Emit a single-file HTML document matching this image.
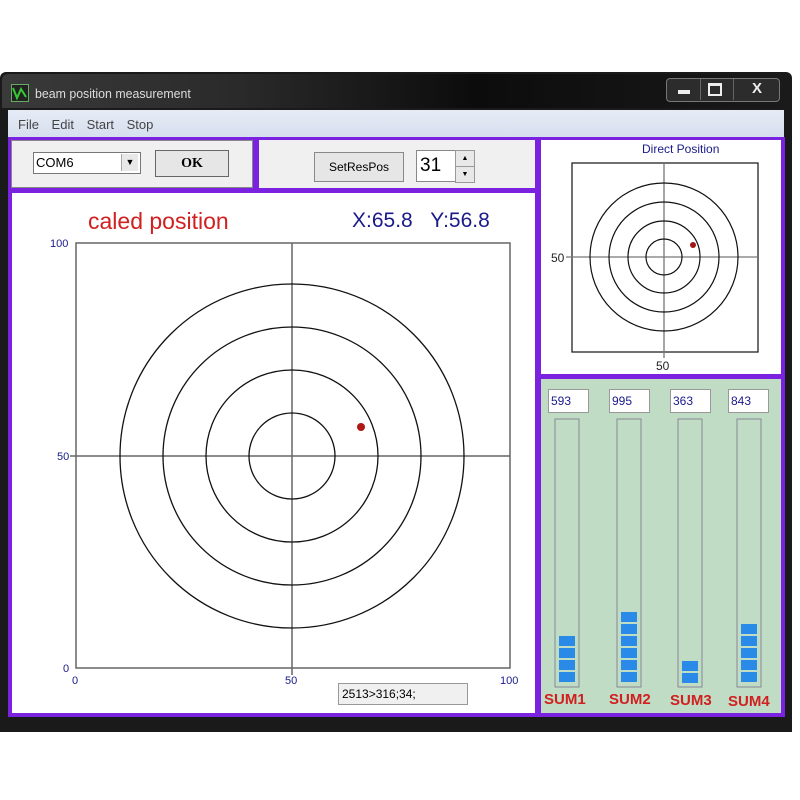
<!DOCTYPE html>
<html><head><style>
body{margin:0;width:800px;height:800px;background:#fff;position:relative;overflow:hidden;font-family:"Liberation Sans",sans-serif}
.a{position:absolute}
</style></head><body>
<div class="a" style="left:0;top:72px;width:792px;height:660px;background:#1a1a1a;border-radius:6px 6px 0 0"></div>
<div class="a" style="left:2px;top:74px;width:788px;height:34px;background:linear-gradient(90deg,#3a3a3a 0%,#2a2a2a 30%,#0c0c0c 60%,#1a1a1a 100%);border-radius:6px 6px 0 0"></div>
<div class="a" style="left:11px;top:84px;width:16px;height:16px;background:#222;border:1px solid #6a6"></div>
<svg class="a" style="left:11px;top:84px" width="18" height="18"><path d="M2 4 L6 14 L10 5 L15 13" stroke="#3c3" stroke-width="2" fill="none"/></svg>
<div class="a" style="left:35px;top:86px;color:#ddd;font-size:13px;transform:scaleX(0.95);transform-origin:left">beam position measurement</div>
<div class="a" style="left:666px;top:78px;width:112px;height:22px;background:#2c2c2c;border:1px solid #777;border-radius:4px"></div>
<div class="a" style="left:678px;top:90px;width:12px;height:4px;background:#eee"></div>
<div class="a" style="left:708px;top:83px;width:10px;height:8px;border:2px solid #eee;border-top-width:3px"></div>
<div class="a" style="left:752px;top:80px;color:#eee;font-size:15px;font-weight:bold">X</div>
<div class="a" style="left:700px;top:79px;width:1px;height:21px;background:#666"></div>
<div class="a" style="left:733px;top:79px;width:1px;height:21px;background:#666"></div>
<div class="a" style="left:8px;top:110px;width:776px;height:27px;background:linear-gradient(#e6ecf6,#d6dfee)"></div>
<div class="a" style="left:18px;top:117px;color:#444;font-size:13px;word-spacing:9px">File Edit Start Stop</div>
<div class="a" style="left:8px;top:137px;width:777px;height:580px;background:#7a22e0"></div>
<div class="a" style="left:11px;top:140px;width:240px;height:46px;background:#f0f0f0;border:1px solid #888"></div>
<div class="a" style="left:33px;top:152px;width:106px;height:20px;background:#fff;border:1px solid #777;font-size:13px;line-height:20px;text-indent:2px">COM6</div>
<div class="a" style="left:121px;top:154px;width:16px;height:17px;background:#e8e8e8;border-left:1px solid #aaa;font-size:9px;text-align:center;line-height:17px">▼</div>
<div class="a" style="left:155px;top:150px;width:72px;height:25px;background:#e6e6e6;border:1px solid #666;font:bold 14px 'Liberation Serif',serif;text-align:center;line-height:25px">OK</div>
<div class="a" style="left:259px;top:140px;width:276px;height:48px;background:#f0f0f0"></div>
<div class="a" style="left:314px;top:152px;width:88px;height:28px;background:#e6e6e6;border:1px solid #888;font-size:12px;text-align:center;line-height:28px">SetResPos</div>
<div class="a" style="left:416px;top:150px;width:38px;height:30px;background:#fff;border:1px solid #888;font-size:19px;line-height:30px;text-indent:3px">31</div>
<div class="a" style="left:455px;top:150px;width:18px;height:15px;background:#e8e8e8;border:1px solid #999;font-size:7px;text-align:center;line-height:15px">▲</div>
<div class="a" style="left:455px;top:166px;width:18px;height:15px;background:#e8e8e8;border:1px solid #999;font-size:7px;text-align:center;line-height:15px">▼</div>
<div class="a" style="left:12px;top:193px;width:523px;height:520px;background:#fff"></div>
<div class="a" style="left:88px;top:208px;color:#d02020;font-size:23px">caled position</div>
<div class="a" style="left:352px;top:209px;color:#1a1a8a;font-size:21px">X:65.8&nbsp;&nbsp;&nbsp;Y:56.8</div>
<svg class="a" style="left:0;top:0" width="800" height="800">
<rect x="76" y="243" width="434" height="425" fill="none" stroke="#666" stroke-width="1.5"/>
<line x1="292" y1="243" x2="292" y2="675" stroke="#666" stroke-width="1.5"/>
<line x1="70" y1="456" x2="510" y2="456" stroke="#666" stroke-width="1.5"/>
<g fill="none" stroke="#111" stroke-width="1.3"><circle cx="292" cy="456" r="43"/><circle cx="292" cy="456" r="86"/><circle cx="292" cy="456" r="129"/><circle cx="292" cy="456" r="172"/></g>
<circle cx="361" cy="427" r="4" fill="#b01818"/>
<g font-size="11" fill="#1a1a8a"><text x="50" y="247">100</text><text x="57" y="460">50</text><text x="63" y="672">0</text><text x="72" y="684">0</text><text x="285" y="684">50</text><text x="500" y="684">100</text></g>
</svg>
<div class="a" style="left:338px;top:683px;width:128px;height:20px;background:#f0f0f0;border:1px solid #999;font-size:12px;line-height:20px;text-indent:3px">2513&gt;316;34;</div>
<div class="a" style="left:541px;top:140px;width:240px;height:234px;background:#fff"></div>
<div class="a" style="left:642px;top:142px;color:#1a1a8a;font-size:12px">Direct Position</div>
<svg class="a" style="left:0;top:0" width="800" height="800">
<rect x="572" y="163" width="186" height="189" fill="none" stroke="#222" stroke-width="1.3"/>
<line x1="664" y1="163" x2="664" y2="358" stroke="#777" stroke-width="1.3"/>
<line x1="566" y1="257" x2="758" y2="257" stroke="#777" stroke-width="1.3"/>
<g fill="none" stroke="#111" stroke-width="1.2"><circle cx="664" cy="257" r="18"/><circle cx="664" cy="257" r="36"/><circle cx="664" cy="257" r="55"/><circle cx="664" cy="257" r="74"/></g>
<circle cx="693" cy="245" r="3" fill="#a01818"/>
<g font-size="12" fill="#222"><text x="551" y="262">50</text><text x="656" y="370">50</text></g>
</svg>
<div class="a" style="left:541px;top:379px;width:240px;height:334px;background:#c0dcc4"></div>
<div class="a" style="left:548px;top:389px;width:39px;height:22px;background:#fff;border:1px solid #999;font-size:12px;line-height:22px;color:#1a1a8a;text-indent:2px">593</div>
<div class="a" style="left:609px;top:389px;width:39px;height:22px;background:#fff;border:1px solid #999;font-size:12px;line-height:22px;color:#1a1a8a;text-indent:2px">995</div>
<div class="a" style="left:670px;top:389px;width:39px;height:22px;background:#fff;border:1px solid #999;font-size:12px;line-height:22px;color:#1a1a8a;text-indent:2px">363</div>
<div class="a" style="left:728px;top:389px;width:39px;height:22px;background:#fff;border:1px solid #999;font-size:12px;line-height:22px;color:#1a1a8a;text-indent:2px">843</div>
<svg class="a" style="left:0;top:0" width="800" height="800">
<g fill="none" stroke="#889" stroke-width="1"><rect x="555" y="419" width="24" height="268"/><rect x="617" y="419" width="24" height="268"/><rect x="678" y="419" width="24" height="268"/><rect x="737" y="419" width="24" height="268"/></g>
<g fill="#2a8ae8">
<rect x="559" y="636" width="16" height="10"/><rect x="559" y="648" width="16" height="10"/><rect x="559" y="660" width="16" height="10"/><rect x="559" y="672" width="16" height="10"/>
<rect x="621" y="612" width="16" height="10"/><rect x="621" y="624" width="16" height="10"/><rect x="621" y="636" width="16" height="10"/><rect x="621" y="648" width="16" height="10"/><rect x="621" y="660" width="16" height="10"/><rect x="621" y="672" width="16" height="10"/>
<rect x="682" y="661" width="16" height="10"/><rect x="682" y="673" width="16" height="10"/>
<rect x="741" y="624" width="16" height="10"/><rect x="741" y="636" width="16" height="10"/><rect x="741" y="648" width="16" height="10"/><rect x="741" y="660" width="16" height="10"/><rect x="741" y="672" width="16" height="10"/>
</g>
<g font-size="15" fill="#d02020" font-weight="bold"><text x="544" y="704">SUM1</text><text x="609" y="704">SUM2</text><text x="670" y="705">SUM3</text><text x="728" y="706">SUM4</text></g>
</svg>
</body></html>
